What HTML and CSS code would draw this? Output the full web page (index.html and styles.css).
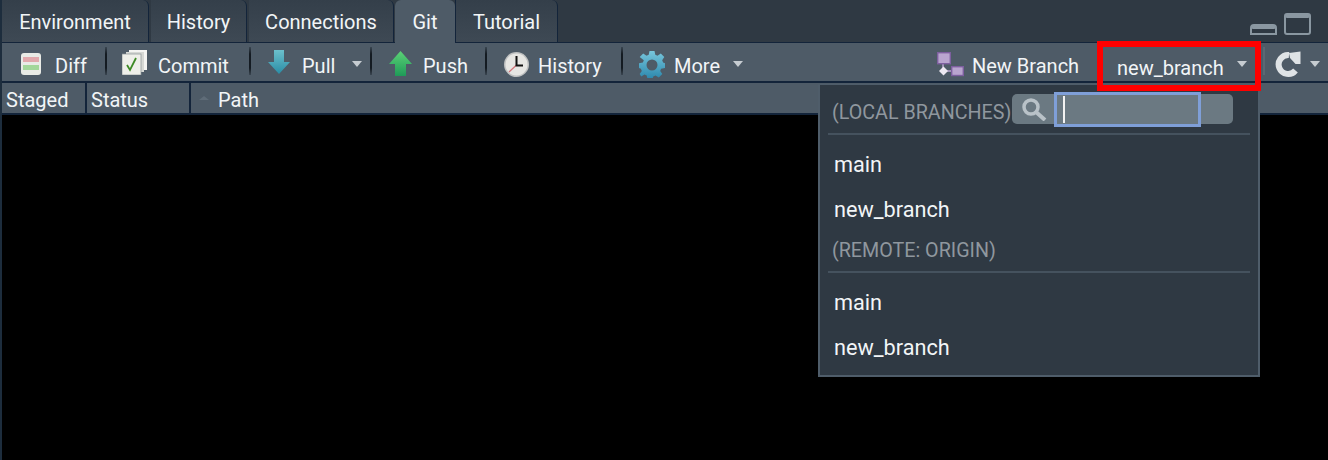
FILE: index.html
```html
<!DOCTYPE html>
<html lang="en">
<head>
<meta charset="utf-8">
<title>Git pane</title>
<link rel="stylesheet" href="styles.css">
</head>
<body>
<div class="pane">
  <div class="tabstrip">
    <div class="tab tab-env">Environment</div>
    <div class="tab tab-hist">History</div>
    <div class="tab tab-conn">Connections</div>
    <div class="tab tab-git active">Git</div>
    <div class="tab tab-tut">Tutorial</div>
    <div class="winctl">
      <svg class="win-min" width="27" height="11" viewBox="0 0 27 11"><path d="M1 10V4Q1 1 4 1H23Q26 1 26 4V10Z" fill="none" stroke="#8a97a1" stroke-width="2"/><rect x="1" y="1" width="25" height="4" rx="2" fill="#8a97a1"/></svg>
      <svg class="win-max" width="27" height="22" viewBox="0 0 27 22"><rect x="1" y="1" width="25" height="20" rx="2" fill="none" stroke="#8a97a1" stroke-width="2"/><rect x="1" y="1" width="25" height="4" rx="2" fill="#8a97a1"/></svg>
    </div>
  </div>

  <div class="toolbar">
    <div class="tool tool-diff">
      <svg width="20" height="22" viewBox="0 0 20 22"><rect width="20" height="22" rx="3" fill="#e9ebe6"/><rect x="2" y="4" width="16" height="5" fill="#e2a9ad"/><rect x="2" y="12" width="16" height="5" fill="#a3d79a"/></svg>
      <span class="label">Diff</span>
    </div>
    <span class="sep"></span>
    <div class="tool tool-commit">
      <svg width="25" height="25" viewBox="0 0 25 25"><rect x="7" y="0" width="18" height="20" fill="#f4f4f2"/><rect x="4" y="2" width="18" height="20" fill="#d6d8d4"/><rect x="0" y="4" width="19" height="21" fill="#eeefe9" stroke="#8b9296" stroke-width=".7"/><path d="M5 15l3 5 6-12" fill="none" stroke="#3d8a24" stroke-width="1.8"/></svg>
      <span class="label">Commit</span>
    </div>
    <span class="sep"></span>
    <div class="tool tool-pull">
      <svg width="22" height="24" viewBox="0 0 22 24"><defs><linearGradient id="pullg" x1="0" y1="0" x2="0" y2="1"><stop offset="0" stop-color="#6cc0cc"/><stop offset="1" stop-color="#2a8da6"/></linearGradient></defs><path d="M6 0H16V12H22L11 24 0 12H6Z" fill="url(#pullg)"/></svg>
      <span class="label">Pull</span>
      <span class="caret caret-pull"></span>
    </div>
    <span class="sep"></span>
    <div class="tool tool-push">
      <svg width="23" height="25" viewBox="0 0 23 25"><defs><linearGradient id="pushg" x1="0" y1="0" x2="0" y2="1"><stop offset="0" stop-color="#5cd276"/><stop offset="1" stop-color="#1f9a58"/></linearGradient></defs><path d="M11.500 0L23 13H17V25H6V13H0Z" fill="url(#pushg)"/></svg>
      <span class="label">Push</span>
    </div>
    <span class="sep"></span>
    <div class="tool tool-history">
      <svg width="25" height="25" viewBox="0 0 25 25"><circle cx="12.500" cy="12.500" r="12.500" fill="#bfc1c1"/><circle cx="12.500" cy="12.500" r="11" fill="#e6e6e3"/><path d="M12.500 13L5 20" stroke="#d2737a" stroke-width="1.200"/><path d="M12.500 4V13.500H19" fill="none" stroke="#111" stroke-width="2"/></svg>
      <span class="label">History</span>
    </div>
    <span class="sep"></span>
    <div class="tool tool-more">
      <svg width="26" height="27" viewBox="0 0 26 27"><defs><linearGradient id="gearg" x1="0" y1="0" x2="0" y2="1"><stop offset="0" stop-color="#78c6dc"/><stop offset="1" stop-color="#2b88ad"/></linearGradient></defs><path fill="url(#gearg)" fill-rule="evenodd" d="M10.500 0h5l.8 3.800 2.200.9L21.800 2.600l3.500 3.500-2.100 3.200.9 2.200L26 12.300v4.600l-3.900.8-.9 2.200 2.100 3.200-3.500 3.500-3.300-2.100-2.200.9-.8 2.600h-5l-.8-3.600-2.200-.9-3.300 2.100L.7 23.100l2.100-3.200-.9-2.200L0 16.900v-4.600l3.900-.8.900-2.200L.7 6.100l3.500-3.500 3.300 2.100 2.200-.9zM13 8.500a5.500 5.500 0 1 0 0 11 5.500 5.500 0 0 0 0-11z"/></svg>
      <span class="label">More</span>
      <span class="caret caret-more"></span>
    </div>
    <div class="spacer"></div>
    <div class="tool tool-newbranch">
      <svg width="27" height="25" viewBox="0 0 27 25"><path d="M6 12V19H14" fill="none" stroke="#b9a5cf" stroke-width="1.500"/><rect x=".7" y=".7" width="12.600" height="11" fill="#b9a5cf" stroke="#7d5f9f" stroke-width="1.400"/><rect x="14.700" y="14.700" width="11.600" height="8.800" fill="#b9a5cf" stroke="#7d5f9f" stroke-width="1.400"/><path d="M6.500 14.500l4.500 4.500-4.500 4.500L2 19z" fill="#eee9f3"/></svg>
      <span class="label">New Branch</span>
    </div>
    <div class="tool tool-branch">
      <span class="label">new_branch</span>
      <span class="caret caret-branch"></span>
    </div>
    <span class="sep sep-faint"></span>
    <div class="tool tool-refresh">
      <svg width="26" height="26" viewBox="0 0 26 26"><path d="M20.500 19.500A9.500 9.500 0 1 1 14 4" fill="none" stroke="#dfe3e6" stroke-width="6"/><path d="M14 2L25.500 .5V13H20.500L15 7Z" fill="#dfe3e6"/></svg>
      <span class="caret caret-refresh"></span>
    </div>
  </div>

  <div class="tablehead">
    <div class="col col-staged">Staged</div>
    <div class="col col-status">Status</div>
    <div class="col col-path"><span class="sort"></span>Path</div>
  </div>

  <div class="tablebody"></div>

  <div class="menu">
    <div class="menu-head menu-head-local">
      <span class="menu-title">(LOCAL BRANCHES)</span>
      <div class="search">
        <svg width="25" height="23" viewBox="0 0 25 23"><circle cx="9" cy="9" r="7" fill="none" stroke="#b9c2c8" stroke-width="3.500"/><path d="M14 14L23 22" stroke="#b9c2c8" stroke-width="4"/></svg>
        <div class="search-input"><span class="cursor"></span></div>
      </div>
    </div>
    <div class="menu-item">main</div>
    <div class="menu-item">new_branch</div>
    <div class="menu-head menu-head-remote">
      <span class="menu-title">(REMOTE: ORIGIN)</span>
    </div>
    <div class="menu-item">main</div>
    <div class="menu-item">new_branch</div>
  </div>

  <div class="highlight"></div>
</div>
</body>
</html>
```
FILE: styles.css
```css
* { box-sizing: border-box; }
html, body { margin: 0; height: 100%; }
body {
  background: #000;
  color: #f2f5f7;
  font-family: Roboto, "Noto Sans", sans-serif;
  font-size: 20px;
  overflow: hidden;
}
svg { flex: none; display: block; }
.pane {
  position: relative;
  width: 1328px;
  height: 460px;
  border-left: 2px solid #1d2d3d;
  display: flex;
  flex-direction: column;
}
.tabstrip {
  height: 43px;
  background: #2f3943;
  border-bottom: 1px solid #13243a;
  display: flex;
  align-items: stretch;
  flex: none;
}
.tab {
  height: 42px;
  padding-top: 7px;
  line-height: 30px;
  text-align: center;
  background: linear-gradient(#343f4a, #3e4954);
  border-right: 1px solid #13243a;
  border-radius: 0 6px 0 0;
  margin-right: 2px;
  white-space: nowrap;
}
.tab-env { width: 147px; }
.tab-hist { width: 96px; }
.tab-conn { width: 145px; margin-right: 1px; }
.tab-git { width: 60px; margin-right: 0; height: 43px; background: #4e5b67; border-right: 0; border-radius: 6px 6px 0 0; }
.tab-tut { width: 103px; border-left: 1px solid #13243a; }
.winctl {
  margin-left: auto;
  display: flex;
  align-items: flex-end;
  gap: 7px;
  padding: 0 17px 7px 0;
}
.toolbar {
  height: 40px;
  background: #4e5b67;
  border-bottom: 2px solid #13243a;
  display: flex;
  align-items: center;
  flex: none;
  padding-left: 19px;
}
.tool { display: flex; align-items: center; flex: none; height: 100%; }
.label { position: relative; top: 4px; white-space: nowrap; line-height: 24px; }
.sep {
  width: 2px;
  height: 28px;
  margin-top: -2px;
  background: linear-gradient(#3a4651, #141b22 25%, #141b22 75%, #3a4651);
  flex: none;
}
.sep-faint { background: #5b6874; margin-left: 17px; }
.caret {
  width: 0;
  height: 0;
  border-left: 5px solid transparent;
  border-right: 5px solid transparent;
  border-top: 6px solid #c6ccd1;
  flex: none;
}
.tool-diff { width: 84px; gap: 14px; }
.tool-diff svg { margin-top: 4px; }
.tool-commit { width: 127px; gap: 11px; margin-left: 15px; }
.tool-pull { gap: 12px; margin-left: 17px; width: 102px; }
.caret-pull { margin-left: 5px; margin-top: 3px; }
.tool-push { gap: 11px; margin-left: 17px; width: 96px; }
.tool-push svg { margin-top: 2px; }
.tool-history { gap: 9px; margin-left: 17px; width: 117px; }
.tool-history svg { margin-top: 4px; }
.tool-more { gap: 9px; margin-left: 16px; }
.tool-more svg { margin-top: 4px; }
.caret-more { margin-left: 4px; margin-top: 3px; }
.spacer { flex: 1; }
.tool-newbranch { gap: 8px; width: 142px; }
.tool-newbranch svg { margin-top: 4px; }
.tool-branch { gap: 13px; margin-left: 38px; width: 129px; }
.tool-branch .label { top: 6px; }
.caret-branch { margin-top: 3px; }
.tool-refresh { gap: 9px; margin-left: 10px; margin-right: 8px; }
.tool-refresh svg { margin-top: 4px; }
.caret-refresh { margin-top: 3px; }
.tablehead {
  height: 32px;
  background: #4e5b67;
  border-bottom: 2px solid #13243a;
  display: flex;
  flex: none;
  line-height: 34px;
}
.col { padding-left: 4px; border-right: 2px solid #13243a; white-space: nowrap; }
.col-staged { width: 85px; }
.col-status { width: 104px; }
.col-path { display: flex; align-items: flex-start; border-right: 0; padding-left: 8px; }
.sort {
  width: 0;
  height: 0;
  margin-right: 9px;
  margin-top: 13px;
  border-left: 5.500px solid transparent;
  border-right: 5.500px solid transparent;
  border-bottom: 4px solid #5f6c78;
}
.tablebody { flex: 1; background: #000; }
.menu {
  position: absolute;
  left: 816px;
  top: 84px;
  width: 442px;
  height: 293px;
  background: #2f3943;
  border: 2px solid #4f5d6a;
  border-top-width: 1px;
  padding: 8px 8px 0;
  display: flex;
  flex-direction: column;
}
.menu-head {
  display: flex;
  align-items: center;
  border-bottom: 2px solid #45525e;
  flex: none;
  padding-left: 4px;
}
.menu-head-local { height: 42px; }
.menu-head-remote { height: 41px; }
.menu-title { color: #8f979e; white-space: nowrap; position: relative; top: -1px; font-size: 19.700px; }
.search {
  position: absolute;
  left: 192px;
  top: 9px;
  width: 221px;
  height: 30px;
  background: #6b7982;
  border-radius: 5px;
  display: flex;
  align-items: center;
  padding-left: 10px;
}
.search-input {
  position: absolute;
  left: 42px;
  top: -2px;
  width: 147px;
  height: 35px;
  background: #6b7982;
  border: 3px solid #7f9fd8;
}
.cursor {
  display: block;
  width: 2px;
  height: 27px;
  margin: 1px 0 0 6px;
  background: #f2f2f2;
}
.menu-item {
  height: 45px;
  line-height: 45px;
  padding-left: 6px;
  flex: none;
  font-size: 21.700px;
}
.menu-head-local + .menu-item { margin-top: 7px; }
.menu-head-remote + .menu-item { margin-top: 7px; }
.highlight {
  position: absolute;
  left: 1095px;
  top: 41px;
  width: 164px;
  height: 50px;
  border: 6px solid #f00;
  pointer-events: none;
}
```
